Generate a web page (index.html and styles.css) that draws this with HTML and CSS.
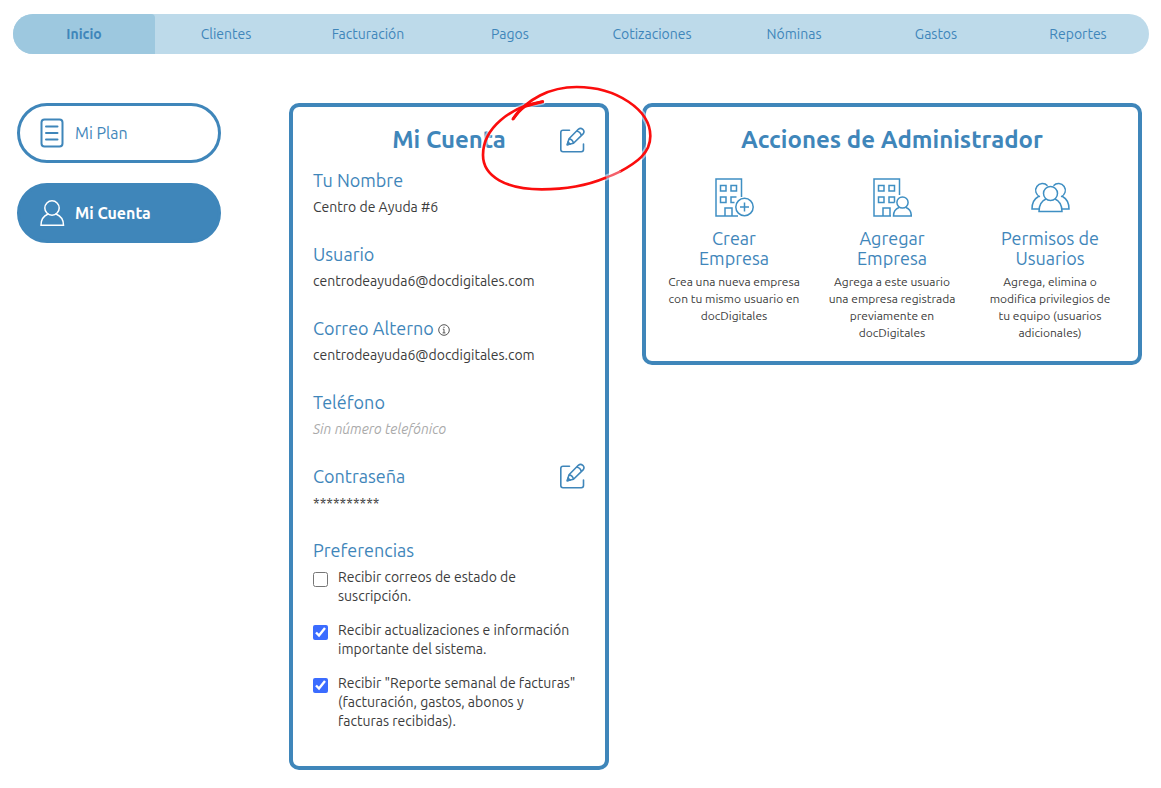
FILE: index.html
```html
<!DOCTYPE html>
<html lang="es">
<head>
<meta charset="utf-8">
<title>Mi Cuenta</title>
<link rel="stylesheet" href="styles.css">
</head>
<body>
<svg class="sprite" aria-hidden="true">
  <symbol id="icon-edit" viewBox="0 0 26 26">
    <path d="M10.500 3.300H4Q1.800 3.300 1.800 5.500V22.500Q1.800 24.700 4 24.700H22.300Q24.500 24.700 24.500 22.500V17"/>
    <path d="M8.300 17.800 10 11.800 19.300 2.300Q21.500 .4 23.800 2.300 26 4.700 24.100 6.900L14.500 16.200Z M10 11.800Q13.500 12.400 14.500 16.200M17.600 4Q21.500 4.800 22.300 8.700"/>
    <path d="M8.300 17.800 9 15 11.200 17Z" fill="currentColor"/>
  </symbol>
  <symbol id="icon-building" viewBox="0 0 39 39">
    <path d="M10 38V30H17V38M5.500 7.500H11V13H5.500ZM16 7.500H21.500V13H16ZM5.500 19H11V24.500H5.500Z"/>
  </symbol>
</svg>

<nav class="topnav" aria-label="Principal">
  <a class="topnav-item is-active" href="#" aria-current="page">Inicio</a>
  <a class="topnav-item" href="#">Clientes</a>
  <a class="topnav-item" href="#">Facturación</a>
  <a class="topnav-item" href="#">Pagos</a>
  <a class="topnav-item" href="#">Cotizaciones</a>
  <a class="topnav-item" href="#">Nóminas</a>
  <a class="topnav-item" href="#">Gastos</a>
  <a class="topnav-item" href="#">Reportes</a>
</nav>

<div class="layout">
  <aside class="sidebar">
    <a class="pill" href="#">
      <svg class="pill-icon" viewBox="0 0 26 32" aria-hidden="true"><rect x="2.500" y="2.500" width="21" height="27" rx="3"/><path d="M7 9.500H18.500M7 16H18.500M7 22.500H18.500"/></svg>
      Mi Plan
    </a>
    <a class="pill pill-active" href="#">
      <svg class="pill-icon pill-icon-thin" viewBox="0 0 26 32" aria-hidden="true"><circle cx="13" cy="11" r="7.200"/><path d="M9 17Q2 20 2 28.200H24.500Q24.500 20 17 17"/></svg>
      Mi Cuenta
    </a>
  </aside>

  <main class="card account">
    <header class="account-head">
      <h1 class="card-title">Mi Cuenta</h1>
      <button class="edit" type="button" aria-label="Editar cuenta"><svg class="edit-icon"><use href="#icon-edit"/></svg></button>
    </header>
    <section class="field">
      <h2 class="label">Tu Nombre</h2>
      <p class="value">Centro de Ayuda #6</p>
    </section>
    <section class="field">
      <h2 class="label">Usuario</h2>
      <p class="value">centrodeayuda6@docdigitales.com</p>
    </section>
    <section class="field">
      <h2 class="label">Correo Alterno
        <svg class="info" viewBox="0 0 12 12" aria-hidden="true"><circle cx="6" cy="6" r="5.300"/><path d="M6 2.700V4M4.800 5.200H6V8.800M4.600 8.900H7.400"/></svg>
      </h2>
      <p class="value">centrodeayuda6@docdigitales.com</p>
    </section>
    <section class="field">
      <h2 class="label">Teléfono</h2>
      <p class="value value-empty">Sin número telefónico</p>
    </section>
    <section class="field field-editable">
      <div>
        <h2 class="label">Contraseña</h2>
        <p class="value">**********</p>
      </div>
      <button class="edit" type="button" aria-label="Editar contraseña"><svg class="edit-icon"><use href="#icon-edit"/></svg></button>
    </section>
    <section class="preferences">
      <h2 class="label">Preferencias</h2>
      <label class="check"><input class="check-box" type="checkbox"><span>Recibir correos de estado de<br>suscripción.</span></label>
      <label class="check"><input class="check-box" type="checkbox" checked><span>Recibir actualizaciones e información<br>importante del sistema.</span></label>
      <label class="check"><input class="check-box" type="checkbox" checked><span>Recibir "Reporte semanal de facturas"<br>(facturación, gastos, abonos y<br>facturas recibidas).</span></label>
    </section>
    <svg class="marker" viewBox="0 0 600 390" aria-hidden="true">
      <path class="marker-halo" d="M130 131C170 72 240 36 320 36C440 36 541 105 541 183C541 235 500 262 450 290C380 324 300 343 215 343C110 343 39 305 39 240C39 160 120 95 218 80"/>
      <path class="marker-line" d="M130 131C170 72 240 36 320 36C440 36 541 105 541 183C541 235 500 262 450 290"/>
      <path class="marker-fade" d="M450 290Q430 300 405 309"/>
      <path class="marker-line" d="M405 309C350 332 290 343 215 343C110 343 39 305 39 240C39 160 120 95 218 80"/>
      <path class="marker-thick" d="M129 132Q145 108 165 94L218 80"/>
    </svg>
  </main>

  <section class="card admin">
    <h2 class="card-title">Acciones de Administrador</h2>
    <div class="actions">
      <a class="action" href="#">
        <svg class="action-icon" viewBox="0 0 39 39" aria-hidden="true"><use href="#icon-building" width="39" height="39"/><path d="M26.500 19V1H1V38H23M21.500 19H16V24.500H19.500"/><circle cx="29.500" cy="29" r="8.700"/><path d="M29.500 24.500V33.500M25 29H34"/></svg>
        <span class="action-title">Crear<br>Empresa</span>
        <span class="action-text">Crea una nueva empresa<br>con tu mismo usuario en<br>docDigitales</span>
      </a>
      <a class="action" href="#">
        <svg class="action-icon" viewBox="0 0 39 39" aria-hidden="true"><use href="#icon-building" width="39" height="39"/><path d="M26.500 17V1H1V38H18M21.500 24.500H16V19H21.500V24.500"/><circle cx="29.500" cy="24.500" r="5.600"/><path d="M26 29.500Q20.500 31.500 20.500 38H38.300Q38.300 31.500 33 29.500"/></svg>
        <span class="action-title">Agregar<br>Empresa</span>
        <span class="action-text">Agrega a este usuario<br>una empresa registrada<br>previamente en<br>docDigitales</span>
      </a>
      <a class="action" href="#">
        <svg class="action-icon" viewBox="0 0 39 39" aria-hidden="true"><circle cx="19.500" cy="15.500" r="7"/><path d="M15 21Q8 24 8 33.500H31Q31 24 24 21M16.500 7.800A6.800 6.800 0 1 0 9 18.700M7.500 18.500Q1 22 1 31H8M22.500 7.800A6.800 6.800 0 1 1 30 18.700M31.500 18.500Q38 22 38 31H31"/></svg>
        <span class="action-title">Permisos de<br>Usuarios</span>
        <span class="action-text">Agrega, elimina o<br>modifica privilegios de<br>tu equipo (usuarios<br>adicionales)</span>
      </a>
    </div>
  </section>
</div>
</body>
</html>
```
FILE: styles.css
```css
* { box-sizing: border-box; }
body {
  margin: 0;
  padding: 14px 12px 18px 13px;
  background: #fff;
  color: #3c3c3c;
  font-family: Ubuntu, "Noto Sans", "Open Sans", sans-serif;
  font-size: 14px;
}
h1, h2, p { margin: 0; }
a { color: inherit; text-decoration: none; }
svg { fill: none; stroke: currentColor; }
.sprite { position: absolute; width: 0; height: 0; }

.topnav {
  display: flex;
  height: 40px;
  border-radius: 20px;
  overflow: hidden;
  background: #bddaea;
  color: #3f86ba;
}
.topnav-item {
  flex: 1 1 0;
  text-align: center;
  line-height: 40px;
}
.is-active {
  background: #9dc8df;
  border-top-right-radius: 4px;
  font-weight: 700;
}

.layout {
  display: grid;
  grid-template-columns: 239px minmax(0, 320fr) minmax(0, 500fr);
  column-gap: 33px;
  align-items: start;
  padding: 49px 7px 0 4px;
}
.sidebar {
  display: flex;
  flex-direction: column;
  gap: 20px;
  padding-right: 35px;
}
.pill {
  display: flex;
  align-items: center;
  gap: 10px;
  height: 60px;
  padding-left: 19px;
  border: 3px solid #3f86ba;
  border-radius: 30px;
  color: #3f86ba;
  font-size: 16px;
}
.pill-active {
  background: #3f86ba;
  color: #fff;
  font-weight: 700;
}
.pill-icon { width: 26px; height: 32px; stroke-width: 2; stroke-linecap: round; }
.pill-icon-thin { stroke-width: 1.5; }

.card {
  border: 4px solid #3f86ba;
  border-radius: 10px;
}
.card-title {
  color: #3f86ba;
  font-size: 24px;
  line-height: 32px;
  font-weight: 700;
  text-align: center;
}
.account {
  position: relative;
  z-index: 1;
  padding: 17px 20px 35px;
}
.account-head {
  display: grid;
  grid-template-columns: 1fr auto 1fr;
  align-items: center;
  margin-bottom: 13px;
}
.account-head .card-title { grid-column: 2; }
.edit {
  justify-self: end;
  width: 26px;
  height: 26px;
  padding: 0;
  border: 0;
  background: none;
  color: #3f86ba;
}
.edit-icon { display: block; width: 26px; height: 26px; stroke-width: 1.6; stroke-linejoin: round; stroke-linecap: round; }
.field { margin-bottom: 26px; }
.field-editable { display: flex; justify-content: space-between; align-items: flex-start; }
.field-editable .edit { margin-top: -2px; }
.label {
  margin-bottom: 6px;
  color: #3f86ba;
  font-size: 18px;
  line-height: 22px;
  font-weight: 400;
}
.value { line-height: 20px; }
.value-empty { color: #aaa; font-style: italic; }
.info { width: 12px; height: 12px; color: #555; vertical-align: -1px; }
.preferences { display: flex; flex-direction: column; }
.preferences .label { margin-bottom: 7px; }
.check {
  display: flex;
  align-items: flex-start;
  gap: 10px;
  margin-bottom: 15px;
  line-height: 19px;
  white-space: nowrap;
}
.check:last-child { margin-bottom: 0; }
.check-box { flex: none; width: 15px; height: 15px; margin: 4px 0 0; accent-color: #3b6cff; }

.marker {
  position: absolute;
  top: -32px;
  right: -65px;
  width: 200px;
  height: 130px;
  color: #fb0d0d;
  pointer-events: none;
  stroke-linecap: round;
}
.marker-halo { stroke: #fff; stroke-width: 18; opacity: .5; }
.marker-line { stroke-width: 8; }
.marker-thick { stroke-width: 9; }
.marker-fade { stroke: #f4606a; stroke-width: 7; }

.admin { padding: 17px 9px 20px; }
.actions { display: grid; grid-template-columns: repeat(3, minmax(0, 1fr)); margin-top: 22px; }
.action { display: flex; flex-direction: column; align-items: center; text-align: center; white-space: nowrap; }
.action-icon { width: 39px; height: 39px; color: #3f8fc3; stroke-width: 1.5; }
.action-title { margin-top: 11px; color: #3f86ba; font-size: 18px; line-height: 20px; }
.action-text { margin-top: 5px; font-size: 12px; line-height: 17px; }
```
